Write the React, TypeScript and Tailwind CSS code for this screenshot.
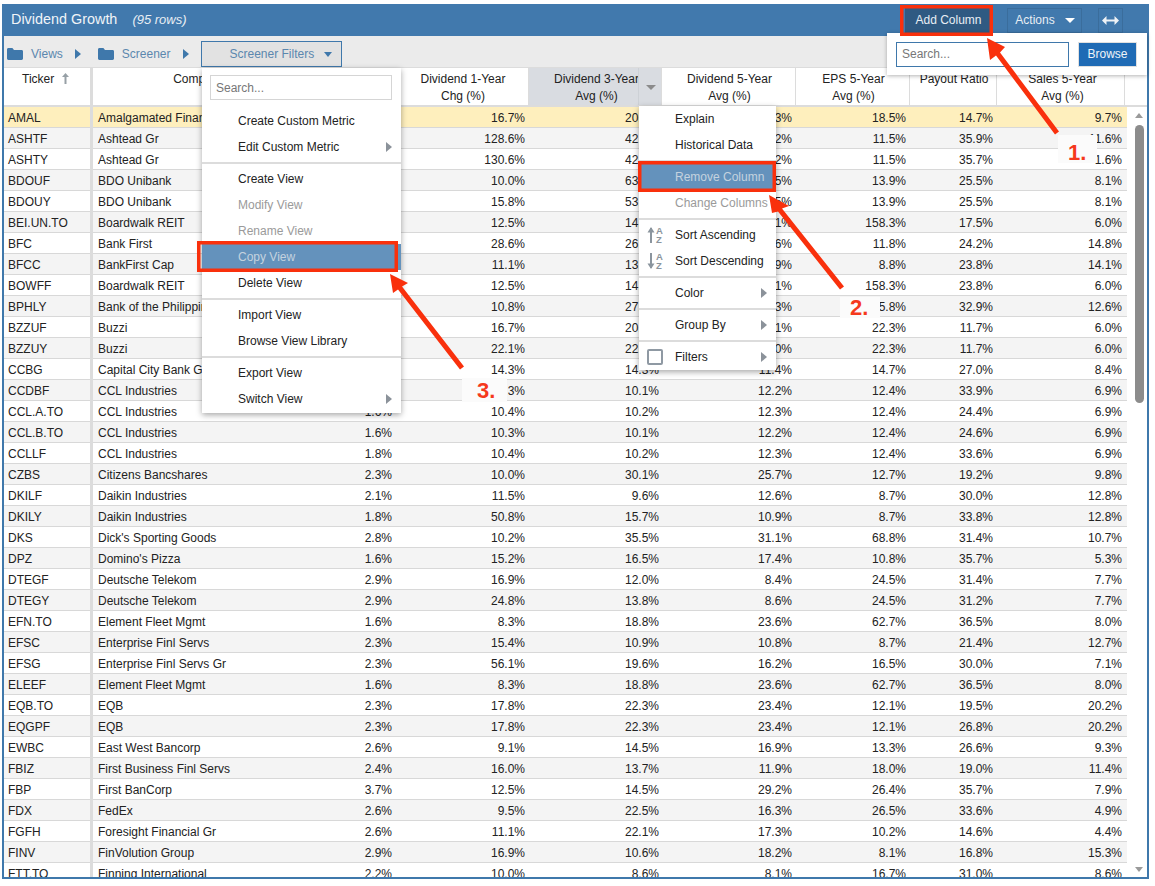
import type { ReactNode } from "react"

type Row = [string, string, string, string, string, string, string, string, string]

const rows: Row[] = [
  ["AMAL", "Amalgamated Financial", "1.9%", "16.7%", "20.5%", "17.3%", "18.5%", "14.7%", "9.7%"],
  ["ASHTF", "Ashtead Gr", "1.1%", "128.6%", "42.8%", "29.2%", "11.5%", "35.9%", "11.6%"],
  ["ASHTY", "Ashtead Gr", "1.1%", "130.6%", "42.9%", "29.2%", "11.5%", "35.7%", "1.6%"],
  ["BDOUF", "BDO Unibank", "1.8%", "10.0%", "63.2%", "31.5%", "13.9%", "25.5%", "8.1%"],
  ["BDOUY", "BDO Unibank", "1.9%", "15.8%", "53.1%", "32.5%", "13.9%", "25.5%", "8.1%"],
  ["BEI.UN.TO", "Boardwalk REIT", "1.7%", "12.5%", "14.2%", "10.1%", "158.3%", "17.5%", "6.0%"],
  ["BFC", "Bank First", "1.6%", "28.6%", "26.5%", "18.6%", "11.8%", "24.2%", "14.8%"],
  ["BFCC", "BankFirst Cap", "2.4%", "11.1%", "13.2%", "11.9%", "8.8%", "23.8%", "14.1%"],
  ["BOWFF", "Boardwalk REIT", "1.7%", "12.5%", "14.2%", "10.1%", "158.3%", "23.8%", "6.0%"],
  ["BPHLY", "Bank of the Philippine", "2.7%", "10.8%", "27.4%", "15.3%", "5.8%", "32.9%", "12.6%"],
  ["BZZUF", "Buzzi", "1.9%", "16.7%", "20.3%", "15.1%", "22.3%", "11.7%", "6.0%"],
  ["BZZUY", "Buzzi", "1.9%", "22.1%", "22.5%", "17.0%", "22.3%", "11.7%", "6.0%"],
  ["CCBG", "Capital City Bank Gr", "2.6%", "14.3%", "14.3%", "11.4%", "14.7%", "27.0%", "8.4%"],
  ["CCDBF", "CCL Industries", "1.6%", "10.3%", "10.1%", "12.2%", "12.4%", "33.9%", "6.9%"],
  ["CCL.A.TO", "CCL Industries", "1.6%", "10.4%", "10.2%", "12.3%", "12.4%", "24.4%", "6.9%"],
  ["CCL.B.TO", "CCL Industries", "1.6%", "10.3%", "10.1%", "12.2%", "12.4%", "24.6%", "6.9%"],
  ["CCLLF", "CCL Industries", "1.8%", "10.4%", "10.2%", "12.3%", "12.4%", "33.6%", "6.9%"],
  ["CZBS", "Citizens Bancshares", "2.3%", "10.0%", "30.1%", "25.7%", "12.7%", "19.2%", "9.8%"],
  ["DKILF", "Daikin Industries", "2.1%", "11.5%", "9.6%", "12.6%", "8.7%", "30.0%", "12.8%"],
  ["DKILY", "Daikin Industries", "1.8%", "50.8%", "15.7%", "10.9%", "8.7%", "33.8%", "12.8%"],
  ["DKS", "Dick's Sporting Goods", "2.8%", "10.2%", "35.5%", "31.1%", "68.8%", "31.4%", "10.7%"],
  ["DPZ", "Domino's Pizza", "1.6%", "15.2%", "16.5%", "17.4%", "10.8%", "35.7%", "5.3%"],
  ["DTEGF", "Deutsche Telekom", "2.9%", "16.9%", "12.0%", "8.4%", "24.5%", "31.4%", "7.7%"],
  ["DTEGY", "Deutsche Telekom", "2.9%", "24.8%", "13.8%", "8.6%", "24.5%", "31.2%", "7.7%"],
  ["EFN.TO", "Element Fleet Mgmt", "1.6%", "8.3%", "18.8%", "23.6%", "62.7%", "36.5%", "8.0%"],
  ["EFSC", "Enterprise Finl Servs", "2.3%", "15.4%", "10.9%", "10.8%", "8.7%", "21.4%", "12.7%"],
  ["EFSG", "Enterprise Finl Servs Gr", "2.3%", "56.1%", "19.6%", "16.2%", "16.5%", "30.0%", "7.1%"],
  ["ELEEF", "Element Fleet Mgmt", "1.6%", "8.3%", "18.8%", "23.6%", "62.7%", "36.5%", "8.0%"],
  ["EQB.TO", "EQB", "2.3%", "17.8%", "22.3%", "23.4%", "12.1%", "19.5%", "20.2%"],
  ["EQGPF", "EQB", "2.3%", "17.8%", "22.3%", "23.4%", "12.1%", "26.8%", "20.2%"],
  ["EWBC", "East West Bancorp", "2.6%", "9.1%", "14.5%", "16.9%", "13.3%", "26.6%", "9.3%"],
  ["FBIZ", "First Business Finl Servs", "2.4%", "16.0%", "13.7%", "11.9%", "18.0%", "19.0%", "11.4%"],
  ["FBP", "First BanCorp", "3.7%", "12.5%", "14.5%", "29.2%", "26.4%", "35.7%", "7.9%"],
  ["FDX", "FedEx", "2.6%", "9.5%", "22.5%", "16.3%", "26.5%", "33.6%", "4.9%"],
  ["FGFH", "Foresight Financial Gr", "2.6%", "11.1%", "22.1%", "17.3%", "10.2%", "14.6%", "4.4%"],
  ["FINV", "FinVolution Group", "2.9%", "16.9%", "10.6%", "18.2%", "8.1%", "16.8%", "15.3%"],
  ["FTT.TO", "Finning International", "2.2%", "10.0%", "8.6%", "8.1%", "16.7%", "31.0%", "8.6%"],
]

function Folder() {
  return (
    <svg width="16" height="12" viewBox="0 0 16 12" className="shrink-0">
      <path d="M0 1.5C0 .7.6 0 1.4 0h4l1.600 2h7.600c.8 0 1.400.6 1.400 1.400v7.200c0 .8-.6 1.400-1.400 1.400H1.400C.6 12 0 11.400 0 10.600z" fill="#3f78ab" />
    </svg>
  )
}

function Tri() {
  return <span className="block h-0 w-0 border-y-[5px] border-l-[6px] border-y-transparent border-l-[#3f78ab]" />
}

function DownTri({ className }: { className: string }) {
  return <span className={`block h-0 w-0 border-t-[5px] border-x-transparent ${className}`} />
}

function MenuItem({ label, disabled, selected, arrow, icon }: { label: string; disabled?: boolean; selected?: boolean; arrow?: boolean; icon?: ReactNode }) {
  return (
    <div className={`relative flex h-[26px] items-center pl-[36px] text-[12px] ${selected ? "bg-[#6492bc] text-[#c4d2df]" : disabled ? "text-[#9a9a9a]" : "text-[#222]"}`}>
      {icon}
      {label}
      {arrow && <span className="absolute right-[9px] top-[8px] h-0 w-0 border-y-[5px] border-l-[6px] border-y-transparent border-l-[#8b929a]" />}
    </div>
  )
}

function Sep() {
  return <div className="my-[2px] h-[2px] bg-[#dcdcdc]" />
}

function SortIcon({ down }: { down?: boolean }) {
  return (
    <svg width="16" height="18" viewBox="0 0 16 18" className="absolute left-[8px] top-[4px]">
      <path d={down ? "M4 1v15" : "M4 17V2"} fill="none" stroke="#8b959e" strokeWidth="2" />
      <path d={down ? "M.5 11.500L4 17l3.500-5.500z" : "M.5 6.500L4 1l3.500 5.500z"} fill="#8b959e" />
      <text x="9" y="8" fontSize="9.500" fontWeight="700" fill="#8b959e" fontFamily="Liberation Sans, sans-serif">A</text>
      <text x="9" y="17" fontSize="9.500" fontWeight="700" fill="#8b959e" fontFamily="Liberation Sans, sans-serif">Z</text>
    </svg>
  )
}

function HeadCell({ className, children }: { className: string; children: ReactNode }) {
  return <div className={`h-full shrink-0 border-r border-[#dcdcdc] pt-[3px] text-center leading-[17px] text-[#222] ${className}`}>{children}</div>
}

function Annotations() {
  return (
    <svg width="1155" height="886" viewBox="0 0 1155 886" className="pointer-events-none absolute left-0 top-0">
      <g fill="none" stroke="#f9300c" strokeWidth="3.500">
        <rect x="901.750" y="6.750" width="89.500" height="27.500" />
        <rect x="639.750" y="162.750" width="134.500" height="27.500" />
        <rect x="198.750" y="242.750" width="197.500" height="27.500" />
      </g>
      <g fill="#f9300c">
        <polygon points="987,38 1005,47 1000,52.500 1059,131.500 1055,134.500 996,55.500 990,60" />
        <polygon points="769,195 789,206 782,208.500 844,286.500 840,289.500 778,211.500 772,213" />
        <polygon points="390,274 408,283 402,286.500 464,366.500 460,369.500 398,289.500 393,293" />
      </g>
    </svg>
  )
}

function NumLabel({ n, className }: { n: string; className: string }) {
  return <div className={`absolute flex items-center bg-[#fbfbfb] text-[22px] font-bold text-[#f5391c] ${className}`}>{n}</div>
}

export default function App() {
  return (
    <div className="relative h-[886px] w-[1155px] overflow-hidden bg-white font-['Liberation_Sans',Arial,sans-serif] text-[12px]">
      <div className="absolute left-[2px] top-[4px] flex h-[875px] w-[1147px] flex-col border-x-2 border-b-2 border-[#3f78ab] bg-white">
        {/* Title bar */}
        <div className="-mx-[2px] flex h-[32px] shrink-0 items-center bg-[#4179ad] pl-[9px] text-white">
          <span className="text-[14.400px] text-[#f0f4f8]">Dividend Growth</span>
          <span className="ml-[15px] text-[13px] italic text-[#e8eef4]">(95 rows)</span>
          <div className="ml-auto mr-[26px] flex items-center">
            <div className="flex h-[25px] w-[87px] items-center justify-center bg-[#2f5a82] text-[12px] text-[#e8eef4]">Add Column</div>
            <div className="ml-[15px] flex h-[25px] w-[75px] items-center justify-center gap-[10px] border border-[#3a6d9c] pl-[1px] text-[12px] text-[#e8eef4]">
              Actions
              <DownTri className="border-x-[5px] border-t-white" />
            </div>
            <div className="ml-[16px] flex h-[25px] w-[25px] items-center justify-center border border-[#3a6d9c]">
              <svg width="17" height="9" viewBox="0 0 17 9"><path d="M0 4.500L4.500 0v3.500h8V0L17 4.500 12.500 9V5.500h-8V9z" fill="#eef2f6" /></svg>
            </div>
          </div>
        </div>

        {/* Toolbar */}
        <div className="flex h-[31px] shrink-0 items-center bg-[#ebebeb] pl-[3px] pt-[5px] text-[12px] text-[#5b87ae]">
          <Folder />
          <span className="ml-[8px]">Views</span>
          <span className="ml-[12px]"><Tri /></span>
          <span className="ml-[17px]"><Folder /></span>
          <span className="ml-[8px]">Screener</span>
          <span className="ml-[12px]"><Tri /></span>
          <div className="ml-[12px] flex h-[26px] w-[141px] items-center gap-[10px] border border-[#3f78ab] bg-[#e2e2e2] pl-[28px]">
            Screener Filters
            <DownTri className="border-x-[4px] border-t-[#3f78ab]" />
          </div>
        </div>

        {/* Column heads */}
        <div className="flex h-[38px] shrink-0 border-t border-[#dcdcdc] bg-white">
          <div className="flex h-full w-[86px] shrink-0 items-start pl-[18px] pt-[3px] leading-[17px] text-[#222]">
            Ticker
            <svg width="7" height="11" viewBox="0 0 7 11" className="ml-[8px] mt-[2px]"><path d="M2.500 11V4H0L3.500 0 7 4H4.500v7z" fill="#97a0a6" /></svg>
          </div>
          <div className="w-[3px] shrink-0 bg-[#dcdcdc]" />
          <HeadCell className="w-[248px]">Company Name</HeadCell>
          <HeadCell className="w-[55px]">Yield</HeadCell>
          <HeadCell className="w-[133px] pl-[2px]">Dividend 1-Year<br />Chg (%)</HeadCell>
          <div className="relative h-full w-[133px] shrink-0 border-r border-[#dcdcdc] bg-[#d9dce1] pl-[25px] pt-[3px] leading-[17px] text-[#222]">
            <div className="w-[85px] overflow-hidden whitespace-nowrap">Dividend 3-Year</div>
            <div className="w-[85px] text-center">Avg (%)</div>
            <span className="absolute bottom-0 left-[109px] top-0 w-px bg-[#cdd1d6]" />
            <span className="absolute right-[5px] top-[17px]"><DownTri className="border-x-[5px] border-t-[#8b8b8b]" /></span>
          </div>
          <HeadCell className="w-[134px] pl-[2px]">Dividend 5-Year<br />Avg (%)</HeadCell>
          <HeadCell className="w-[114px] pl-[2px]">EPS 5-Year<br />Avg (%)</HeadCell>
          <HeadCell className="w-[87px] pl-[2px]">Payout Ratio</HeadCell>
          <HeadCell className="w-[128px] pl-[4px]">Sales 5-Year<br />Avg (%)</HeadCell>
        </div>
        <div className="h-[2px] shrink-0 bg-[#dcdcdc]" />

        {/* Rows */}
        <div className="flex min-h-0 flex-1 overflow-hidden">
          <div className="w-[1123px] shrink-0">
            {rows.map((r, i) => (
              <div key={r[0]} className={`flex h-[21px] items-center border-b border-[#d8d8d8] pt-[1px] text-[12px] text-[#222] ${i === 0 ? "bg-[#feefbd]" : i % 2 === 1 ? "bg-[#f4f4f4]" : "bg-white"}`}>
                <div className="w-[86px] shrink-0 pl-[4px]">{r[0]}</div>
                <div className="-mt-[1px] h-[21px] w-[3px] shrink-0 bg-[#dcdcdc]" />
                <div className="w-[248px] shrink-0 pl-[5px]">{r[1]}</div>
                <div className="w-[55px] shrink-0 pr-[4px] text-right">{r[2]}</div>
                <div className="w-[133px] shrink-0 pr-[4px] text-right">{r[3]}</div>
                <div className="w-[133px] shrink-0 pr-[3px] text-right">{r[4]}</div>
                <div className="w-[134px] shrink-0 pr-[4px] text-right">{r[5]}</div>
                <div className="w-[114px] shrink-0 pr-[4px] text-right">{r[6]}</div>
                <div className="w-[87px] shrink-0 pr-[4px] text-right">{r[7]}</div>
                <div className="w-[128px] shrink-0 pr-[3px] text-right">{r[8]}</div>
              </div>
            ))}
          </div>
          {/* Scrollbar */}
          <div className="relative w-[20px] shrink-0">
            <span className="absolute left-[8px] top-[6px] h-0 w-0 border-x-[4px] border-b-[5px] border-x-transparent border-b-[#9a9a9a]" />
            <div className="absolute left-[8px] top-[18px] h-[278px] w-[9px] rounded-[5px] bg-[#8c8c8c]" />
            <span className="absolute bottom-[5px] left-[8px] h-0 w-0 border-x-[4px] border-t-[5px] border-x-transparent border-t-[#9a9a9a]" />
          </div>
        </div>
      </div>

      {/* Views menu */}
      <div className="absolute left-[202px] top-[68px] w-[199px] bg-white pb-[1px] shadow-[0_2px_6px_rgba(0,0,0,0.35)]">
        <div className="px-[8px] pb-[8px] pt-[7px]">
          <div className="flex h-[25px] w-[182px] items-center border border-[#d5d5d5] pl-[5px] pt-[1px] text-[12px] text-[#777]">Search...</div>
        </div>
        <MenuItem label="Create Custom Metric" />
        <MenuItem label="Edit Custom Metric" arrow />
        <Sep />
        <MenuItem label="Create View" />
        <MenuItem label="Modify View" disabled />
        <MenuItem label="Rename View" disabled />
        <MenuItem label="Copy View" selected />
        <MenuItem label="Delete View" />
        <Sep />
        <MenuItem label="Import View" />
        <MenuItem label="Browse View Library" />
        <Sep />
        <MenuItem label="Export View" />
        <MenuItem label="Switch View" arrow />
      </div>

      {/* Column menu */}
      <div className="absolute left-[639px] top-[106px] w-[137px] bg-white shadow-[0_2px_6px_rgba(0,0,0,0.35)]">
        <MenuItem label="Explain" />
        <MenuItem label="Historical Data" />
        <Sep />
        <MenuItem label="Remove Column" selected />
        <MenuItem label="Change Columns" disabled />
        <Sep />
        <MenuItem label="Sort Ascending" icon={<SortIcon />} />
        <MenuItem label="Sort Descending" icon={<SortIcon down />} />
        <Sep />
        <MenuItem label="Color" arrow />
        <Sep />
        <MenuItem label="Group By" arrow />
        <Sep />
        <MenuItem label="Filters" arrow icon={<span className="absolute left-[8px] top-[5px] h-[16px] w-[16px] rounded-[2px] border-2 border-[#8f99a3]" />} />
      </div>

      {/* Add column popover */}
      <div className="absolute left-[887px] top-[33px] flex h-[42px] w-[260px] items-center gap-[9px] bg-white pl-[9px] shadow-[0_1px_4px_rgba(0,0,0,0.3)]">
        <div className="flex h-[25px] w-[173px] items-center border border-[#3f78ab] pl-[5px] text-[12px] text-[#777]">Search...</div>
        <div className="flex h-[25px] w-[59px] items-center justify-center border border-[#e0e0e0] bg-[#1f6bb5] text-[12px] text-[#f0f4f8]">Browse</div>
      </div>

      <Annotations />
      <NumLabel n="1." className="left-[1058px] top-[135px] h-[28px] w-[39px] pl-[10px] pt-[6px]" />
      <NumLabel n="2." className="left-[840px] top-[297px] h-[21px] w-[40px] pl-[10px]" />
      <NumLabel n="3." className="left-[462px] top-[378px] h-[24px] w-[45px] pl-[15px]" />
    </div>
  )
}
